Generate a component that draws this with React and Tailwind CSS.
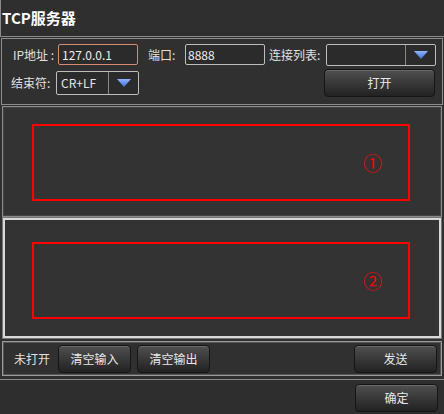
import React from "react";

const Arrow = () => (
    <svg width="14" height="8" viewBox="0 0 14 8">
        <defs>
            <linearGradient id="arr" x1="0" y1="0" x2="0" y2="1">
                <stop offset="0" stopColor="#8fb4ff" />
                <stop offset="1" stopColor="#3f6fd8" />
            </linearGradient>
        </defs>
        <path d="M0 0 H14 L7 8 Z" fill="url(#arr)" />
    </svg>
);

const Combo = ({ width, height, value }) => (
    <div
        className={`flex items-stretch border border-[#bdbdbd] rounded-[2px] bg-[#2b2b2b] ${width} ${height}`}
    >
        <div className="flex-1 flex items-center pl-[4px] text-[12px] text-[#e6e6e6]">{value}</div>
        <div className="w-[30px] border-l border-[#8a8a8a] flex items-center justify-center">
            <Arrow />
        </div>
    </div>
);

const Btn = ({ children, className }) => (
    <button
        className={`flex items-center justify-center rounded-[4px] border border-[#151515] bg-gradient-to-b from-[#505050] to-[#222222] text-[12px] text-[#e8e8e8] shadow-[inset_0_1px_0_rgba(255,255,255,0.15)] ${className}`}
    >
        {children}
    </button>
);

const Panel = ({ num, className, inner }) => (
    <div className={`mx-[2px] bg-[#333333] ${className}`}>
        <div className={`${inner} h-[77px] border-2 border-[#ff0000] flex items-center justify-end pr-[26px]`}>
            <span className="text-[19px] leading-none text-[#ff0000]">{num}</span>
        </div>
    </div>
);

export default function App() {
    return (
        <div
            className="w-[444px] h-[414px] bg-[#303030] flex flex-col overflow-hidden text-[#e0e0e0] whitespace-nowrap"
            style={{ fontFamily: '"Noto Sans CJK SC", "Noto Sans", sans-serif' }}
        >
            {/* Title */}
            <div className="h-[37px] flex items-center pl-[1px] border-b border-[#8a8a8a] border-l bg-[#2f2f2f]">
                <span className="text-[15px] font-bold text-white">TCP服务器</span>
            </div>

            {/* Settings */}
            <div className="mt-[1px] mx-[1px] h-[67px] border border-[#8c8c8c] bg-[#303030] flex flex-col">
                <div className="flex items-center mt-[5px] h-[21px]">
                    <span className="ml-[11px] w-[45px] text-[12px]">IP地址 :</span>
                    <div className="w-[80px] h-[21px] border border-[#d98a70] rounded-[2px] bg-[#2b2b2b] flex items-center pl-[3px] text-[12px] text-[#eeeeee]">
                        127.0.0.1
                    </div>
                    <span className="ml-[10px] w-[37px] text-[12px]">端口:</span>
                    <div className="w-[80px] h-[21px] border border-[#bdbdbd] rounded-[2px] bg-[#2b2b2b] flex items-center pl-[2px] text-[12px] text-[#eeeeee]">
                        8888
                    </div>
                    <span className="ml-[4px] w-[57px] text-[12px]">连接列表:</span>
                    <Combo width="w-[110px]" height="h-[22px]" value="" />
                </div>
                <div className="flex items-center mt-[4px]">
                    <span className="ml-[9px] w-[45px] text-[12px]">结束符:</span>
                    <Combo width="w-[83px]" height="h-[24px]" value="CR+LF" />
                    <div className="flex-1" />
                    <Btn className="w-[111px] h-[28px] mr-[7px]">打开</Btn>
                </div>
            </div>

            {/* Output panel */}
            <Panel
                num="①"
                inner="mt-[17px] ml-[29px] mr-[31px]"
                className="mt-[1px] h-[111px] border border-[#8a8a8a] shadow-[inset_0_0_0_1px_#444]"
            />

            {/* Input panel */}
            <Panel
                num="②"
                inner="mt-[22px] ml-[27px] mr-[29px]"
                className="mt-[1px] mx-[3px] h-[120px] border-2 border-[#d8d8d8] shadow-[0_0_0_1px_#777]"
            />

            {/* Action row */}
            <div className="mt-[3px] mx-[2px] h-[35px] border border-[#9a9a9a] shadow-[inset_0_0_0_1px_#555] flex items-center">
                <span className="ml-[11px] text-[12px]">未打开</span>
                <Btn className="ml-[8px] w-[73px] h-[28px]">清空输入</Btn>
                <Btn className="ml-[6px] w-[73px] h-[28px]">清空输出</Btn>
                <div className="flex-1" />
                <Btn className="w-[83px] h-[28px] mr-[4px]">发送</Btn>
            </div>

            {/* Footer */}
            <div className="mt-[3px] flex-1 border-t border-[#8a8a8a] bg-[#2e2e2e] flex items-start justify-end">
                <Btn className="mt-[4px] mr-[6px] w-[83px] h-[28px]">确定</Btn>
            </div>
        </div>
    );
}
